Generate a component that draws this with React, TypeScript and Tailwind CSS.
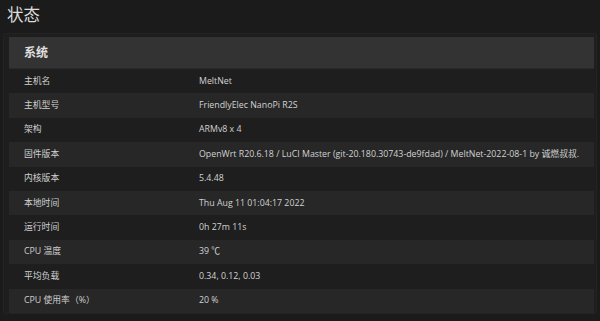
import React from "react";

const rows: [string, string][] = [
  ["主机名", "MeltNet"],
  ["主机型号", "FriendlyElec NanoPi R2S"],
  ["架构", "ARMv8 x 4"],
  ["固件版本", "OpenWrt R20.6.18 / LuCI Master (git-20.180.30743-de9fdad) / MeltNet-2022-08-1 by 诚燃叔叔."],
  ["内核版本", "5.4.48"],
  ["本地时间", "Thu Aug 11 01:04:17 2022"],
  ["运行时间", "0h 27m 11s"],
  ["CPU 温度", "39 ℃"],
  ["平均负载", "0.34, 0.12, 0.03"],
  ["CPU 使用率（%）", "20 %"],
];

export default function App() {
  return (
    <div
      className="w-[600px] h-[321px] overflow-hidden bg-[#1b1b1b] text-[#d4d4d4]"
      style={{ fontFamily: '"Open Sans", "Noto Sans CJK SC", sans-serif' }}
    >
      <div className="h-[33px] pl-[7px] pt-[4px] text-[16.5px] leading-[22px] text-[#dcdcdc]">状态</div>
      <div className="mx-[3px] pl-[5px] pr-[2px] pt-[3px] bg-[#1e1e1e] border border-[#232323] rounded-[2px]">
        <div className="h-[32px] flex items-center pl-[15px] bg-[#333333] text-[12px] font-bold text-[#e0e0e0] border-b border-[#2a2a2a]">
          系统
        </div>
        {rows.map(([k, v], i) => (
          <div
            key={k}
            className={`h-[24.4px] flex items-center text-[8.8px] ${i % 2 === 1 ? "bg-[#272727]" : "bg-[#1e1e1e]"}`}
          >
            <div className="w-[190px] shrink-0 pl-[15px] text-[#cfcfcf]">{k}</div>
            <div className="flex-1 text-[#d2d2d2] whitespace-nowrap">{v}</div>
          </div>
        ))}
      </div>
    </div>
  );
}
